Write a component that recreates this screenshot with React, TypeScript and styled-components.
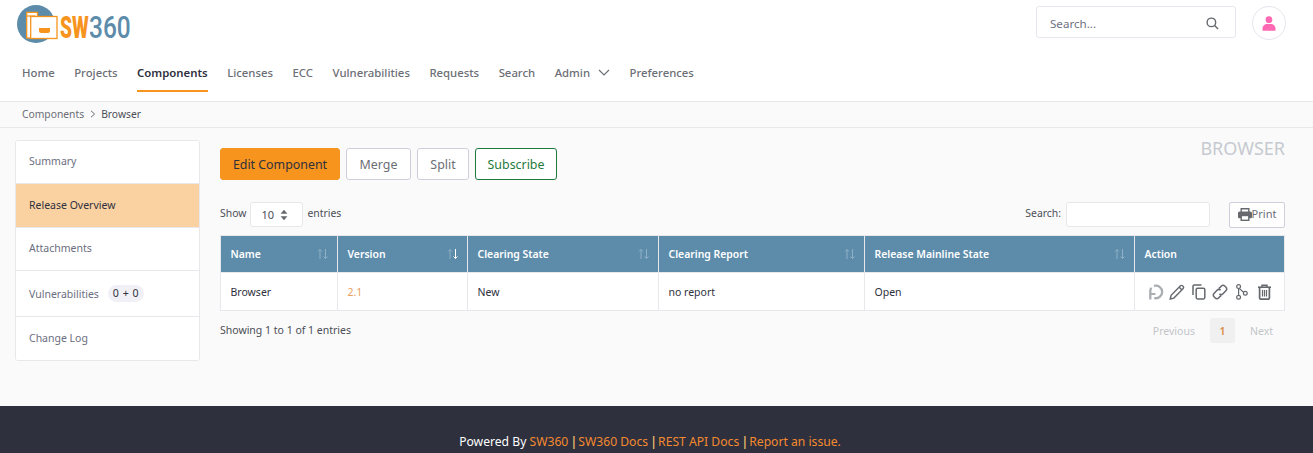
import * as React from "react";
import styled, { createGlobalStyle } from "styled-components";

const GlobalStyle = createGlobalStyle`
  html, body {
    margin: 0;
    padding: 0;
    background: #fafafa;
    font-family: "Noto Sans", "Open Sans", sans-serif;
    color: #212529;
  }
`;

const NAV_ITEMS = [
  "Home",
  "Projects",
  "Components",
  "Licenses",
  "ECC",
  "Vulnerabilities",
  "Requests",
  "Search",
  "Admin",
  "Preferences",
];

const COLUMNS = [
  { title: "Name", width: 117, sort: true },
  { title: "Version", width: 130, sort: true, active: true },
  { title: "Clearing State", width: 191, sort: true },
  { title: "Clearing Report", width: 206, sort: true },
  { title: "Release Mainline State", width: 270, sort: true },
  { title: "Action", width: 150, sort: false },
];

const Logo: React.FC = () => (
  <svg width="140" height="48" viewBox="0 0 140 48">
    <circle cx="20" cy="24" r="19" fill="#5d8cab" />
    <path d="M10.7 16V12.3H21.5V16" fill="#fff" stroke="#f7941d" strokeWidth="1.3" />
    <rect x="10.7" y="16" width="8" height="22" fill="#fff" stroke="#f7941d" strokeWidth="1.3" />
    <rect x="14.7" y="16.5" width="26.3" height="22" fill="#fff" stroke="#f7941d" strokeWidth="1.3" />
    <path d="M23 28H34V31Q34 33 32 33H25Q23 33 23 31Z" fill="#f7941d" />
    <text transform="translate(44 38) scale(.62 1)" fontFamily="Roboto, sans-serif" fontWeight="900" fontSize="31" fill="#f7941d">SW</text>
    <text transform="translate(73 38) scale(.79 1)" fontFamily="Roboto, sans-serif" fontWeight="500" fontSize="31" fill="#5d8cab">360</text>
  </svg>
);

const SortIcon: React.FC<{ active?: boolean }> = ({ active }) => (
  <svg width="12" height="12" viewBox="0 0 12 12" fill="none" strokeWidth="1">
    <path d="M3 11V1.5M1 3.5l2-2 2 2" stroke="#8fb0c6" />
    <path d="M8.5 1v9.5M6.5 8.5l2 2 2-2" stroke={active ? "#ffffff" : "#8fb0c6"} />
  </svg>
);

const ActionIcons: React.FC = () => (
  <ActionRow>
    <svg width="16" height="16" viewBox="0 0 16 16" fill="none" stroke="#a9adb1" strokeWidth="2.3">
      <path d="M6 1.9A6.3 6.3 0 1 1 6.2 14" />
      <path d="M2.3 15.5V6.2A4 4 0 0 1 3.6 3.8" />
      <path d="M2 10h5.4" strokeWidth="2" />
    </svg>
    <svg width="16" height="16" viewBox="0 0 16 16" fill="none" stroke="#66696e" strokeWidth="1.4">
      <path d="M1.2 15l.9-3.7L11.5 1.8a1.4 1.4 0 0 1 2 0l.7.7a1.4 1.4 0 0 1 0 2L4.9 14.1z" />
      <path d="M10.2 3.2l2.6 2.6" />
    </svg>
    <svg width="14" height="16" viewBox="0 0 14 16" fill="none" stroke="#66696e" strokeWidth="1.5">
      <path d="M9.5 1H2.2C1.5 1 1 1.5 1 2.2V11" />
      <rect x="4.2" y="4.2" width="8.6" height="10.8" rx="1.4" />
    </svg>
    <svg width="16" height="16" viewBox="0 0 16 16" fill="none" stroke="#66696e" strokeWidth="1.5">
      <path d="M6.8 4.6l2.4-2.4a2.7 2.7 0 0 1 3.8 0l.8.8a2.7 2.7 0 0 1 0 3.8L11 9.7a2.7 2.7 0 0 1-3.6.2" />
      <path d="M9.2 11.4l-2.4 2.4a2.7 2.7 0 0 1-3.8 0l-.8-.8a2.7 2.7 0 0 1 0-3.8L5 6.3a2.7 2.7 0 0 1 3.6-.2" />
    </svg>
    <svg width="12" height="16" viewBox="0 0 12 16" fill="none" stroke="#66696e" strokeWidth="1.2">
      <circle cx="2.6" cy="2.6" r="1.9" />
      <circle cx="2.6" cy="13.2" r="1.9" />
      <circle cx="9.3" cy="9.2" r="1.9" />
      <path d="M2.6 4.6v6.6M3.4 4.6L7.6 8.2" />
    </svg>
    <svg width="13" height="16" viewBox="0 0 13 16" fill="none" stroke="#66696e">
      <path d="M0 3.2h13" strokeWidth="1.6" />
      <path d="M4 3V1.2h5V3" strokeWidth="1.4" />
      <path d="M1.6 3.5V14a1.2 1.2 0 0 0 1.2 1.2h7.4a1.2 1.2 0 0 0 1.2-1.2V3.5" strokeWidth="1.7" />
      <path d="M4.5 6v6.4M6.5 6v6.4M8.5 6v6.4" strokeWidth="1.2" />
    </svg>
  </ActionRow>
);

export default function App() {
  return (
    <>
      <GlobalStyle />
      <Page>
        <Header>
          <TopRow>
            <Logo />
            <HeaderTools>
              <GlobalSearch>
                <span>Search...</span>
                <svg width="13" height="13" viewBox="0 0 14 14" fill="none" stroke="#66696e" strokeWidth="1.5">
                  <circle cx="5.8" cy="5.8" r="4.6" />
                  <path d="M9.2 9.2L13 13" />
                </svg>
              </GlobalSearch>
              <Avatar>
                <svg width="14" height="15" viewBox="0 0 14 15" fill="#ff69b4">
                  <circle cx="7" cy="3.7" r="3.4" />
                  <path d="M0.5 14.8v-2.2C0.5 9.8 2.8 8 5 8h4c2.2 0 4.5 1.8 4.5 4.6v2.2z" />
                </svg>
              </Avatar>
            </HeaderTools>
          </TopRow>
          <Nav>
            {NAV_ITEMS.map((item) => (
              <NavItem key={item} $active={item === "Components"}>
                {item}
                {item === "Admin" && (
                  <svg width="12" height="7" viewBox="0 0 12 7" fill="none" stroke="#6b6e75" strokeWidth="1.2">
                    <path d="M1 1l5 5 5-5" />
                  </svg>
                )}
              </NavItem>
            ))}
          </Nav>
        </Header>
        <Breadcrumb>
          <span>Components</span>
          <svg width="6" height="8" viewBox="0 0 6 8" fill="none" stroke="#6b6e75" strokeWidth="1">
            <path d="M1 .8L4.6 4 1 7.2" />
          </svg>
          <BreadcrumbCurrent>Browser</BreadcrumbCurrent>
        </Breadcrumb>
        <Content>
          <Sidebar>
            <SideItem $height={43}>Summary</SideItem>
            <SideItem $height={44} $active>Release Overview</SideItem>
            <SideItem $height={43}>Attachments</SideItem>
            <SideItem $height={46} $flush>
              Vulnerabilities
              <Pill>0 + 0</Pill>
            </SideItem>
            <SideItem $height={43}>Change Log</SideItem>
          </Sidebar>
          <Main>
            <ButtonBar>
              <Buttons>
                <PrimaryButton>Edit Component</PrimaryButton>
                <GhostButton $width={65}>Merge</GhostButton>
                <GhostButton $width={52}>Split</GhostButton>
                <SubscribeButton>Subscribe</SubscribeButton>
              </Buttons>
              <PageTitle>BROWSER</PageTitle>
            </ButtonBar>
            <TableControls>
              <Entries>
                <ControlText>Show</ControlText>
                <EntriesSelect>
                  10
                  <svg width="8" height="12" viewBox="0 0 8 12" fill="#66696e">
                    <path d="M4 .8L7.4 4.8H.6zM4 11.2L.6 7.2h6.8z" />
                  </svg>
                </EntriesSelect>
                <ControlText>entries</ControlText>
              </Entries>
              <TableTools>
                <ControlText>Search:</ControlText>
                <SearchInput />
                <PrintButton>
                  <svg width="14" height="13" viewBox="0 0 14 13" fill="none" stroke="#66696e" strokeWidth="1.4">
                    <path d="M3.2 4.5V.8h7.6v3.7" />
                    <path d="M3 9.5H1.2a.5.5 0 0 1-.5-.5V5.2c0-.6.4-1 1-1h10.6c.6 0 1 .4 1 1V9a.5.5 0 0 1-.5.5H11" fill="#66696e" />
                    <rect x="3.2" y="7.5" width="7.6" height="4.8" fill="#fff" />
                  </svg>
                  <PrintLabel>Print</PrintLabel>
                </PrintButton>
              </TableTools>
            </TableControls>
            <Table>
              <colgroup>
                {COLUMNS.map((col) => (
                  <col key={col.title} width={col.width} />
                ))}
              </colgroup>
              <thead>
                <tr>
                  {COLUMNS.map((col) => (
                    <HeadCell key={col.title}>
                      <HeadInner>
                        {col.title}
                        {col.sort && <SortIcon active={col.active} />}
                      </HeadInner>
                    </HeadCell>
                  ))}
                </tr>
              </thead>
              <tbody>
                <tr>
                  <BodyCell>Browser</BodyCell>
                  <BodyCell><VersionLink>2.1</VersionLink></BodyCell>
                  <BodyCell>New</BodyCell>
                  <BodyCell>no report</BodyCell>
                  <BodyCell>Open</BodyCell>
                  <BodyCell><ActionIcons /></BodyCell>
                </tr>
              </tbody>
            </Table>
            <TableFooter>
              <EntriesInfo>Showing 1 to 1 of 1 entries</EntriesInfo>
              <Pager>
                <PagerLabel>Previous</PagerLabel>
                <PagerCurrent>1</PagerCurrent>
                <PagerLabel>Next</PagerLabel>
              </Pager>
            </TableFooter>
          </Main>
        </Content>
        <Footer>
          <span>Powered By </span>
          <FooterLink>SW360</FooterLink>
          <FooterSep> | </FooterSep>
          <FooterLink>SW360 Docs</FooterLink>
          <FooterSep> | </FooterSep>
          <FooterLink>REST API Docs</FooterLink>
          <FooterSep> | </FooterSep>
          <FooterLink>Report an issue.</FooterLink>
        </Footer>
      </Page>
    </>
  );
}

const Page = styled.div`
  width: 1313px;
  height: 453px;
  overflow: hidden;
  display: flex;
  flex-direction: column;
`;

const Header = styled.header`
  background: #fff;
  height: 102px;
  box-sizing: border-box;
  border-bottom: 1px solid #e8e8ec;
  flex-shrink: 0;
`;

const TopRow = styled.div`
  display: flex;
  justify-content: space-between;
  height: 54px;
  padding: 0 27px 0 16px;
`;

const HeaderTools = styled.div`
  display: flex;
  align-items: flex-start;
  gap: 16px;
  padding-top: 6px;
`;

const GlobalSearch = styled.div`
  width: 200px;
  height: 32px;
  box-sizing: border-box;
  border: 1px solid #e6e6ee;
  border-radius: 3px;
  display: flex;
  align-items: center;
  justify-content: space-between;
  padding: 2px 16px 0 13px;
  font-size: 11.6px;
  color: #6d7280;
`;

const Avatar = styled.div`
  width: 34px;
  height: 34px;
  box-sizing: border-box;
  border: 1px solid #e6e6ee;
  border-radius: 50%;
  display: flex;
  align-items: center;
  justify-content: center;
`;

const Nav = styled.nav`
  display: flex;
  gap: 19.5px;
  padding-left: 22px;
  height: 38px;
`;

const NavItem = styled.div<{ $active?: boolean }>`
  font-size: 11.35px;
  font-weight: ${(p) => (p.$active ? 600 : 500)};
  height: 38px;
  box-sizing: border-box;
  display: flex;
  align-items: center;
  gap: 8px;
  color: ${(p) => (p.$active ? "#2e303e" : "#6b6e75")};
  border-bottom: 2px solid ${(p) => (p.$active ? "#f7941d" : "transparent")};
`;

const Breadcrumb = styled.div`
  height: 26px;
  box-sizing: border-box;
  flex-shrink: 0;
  background: #fafafa;
  border-bottom: 1px solid #e8e8ec;
  padding: 0 0 2px 22px;
  display: flex;
  align-items: center;
  gap: 5.5px;
  font-size: 10.3px;
  color: #6b6e75;
`;

const BreadcrumbCurrent = styled.span`
  color: #4b4e57;
`;

const Content = styled.div`
  flex: 1;
  display: flex;
  align-items: flex-start;
  padding: 12px 28px 0 15px;
  gap: 20px;
`;

const Sidebar = styled.aside`
  width: 185px;
  box-sizing: border-box;
  background: #fff;
  border: 1px solid #e8e8ec;
  border-radius: 3px;
  flex-shrink: 0;
  overflow: hidden;
`;

const SideItem = styled.div<{ $height: number; $active?: boolean; $flush?: boolean }>`
  height: ${(p) => p.$height}px;
  box-sizing: border-box;
  display: flex;
  align-items: center;
  padding: 0 0 ${(p) => (p.$flush ? 0 : 2)}px 13px;
  font-size: 10.5px;
  color: ${(p) => (p.$active ? "#2e303e" : "#6b6e80")};
  background: ${(p) => (p.$active ? "#fad2a2" : "#fff")};
  border-bottom: 1px solid #e8e8ec;

  &:last-child {
    border-bottom: 0;
  }
`;

const Pill = styled.span`
  margin-left: 9px;
  height: 17px;
  padding: 0 5px;
  border-radius: 9px;
  background: #f0f0f6;
  color: #2e303e;
  font-size: 10.6px;
  line-height: 17px;
  word-spacing: 1px;
`;

const Main = styled.main`
  flex: 1;
  min-width: 0;
`;

const ButtonBar = styled.div`
  display: flex;
  justify-content: space-between;
  align-items: flex-start;
  padding-top: 8px;
  height: 53px;
`;

const Buttons = styled.div`
  display: flex;
  gap: 6px;
`;

const BaseButton = styled.button`
  height: 32px;
  box-sizing: border-box;
  border-radius: 3px;
  font-family: inherit;
  font-size: 12.4px;
  padding: 0;
  white-space: nowrap;
  background: #fff;
`;

const PrimaryButton = styled(BaseButton)`
  width: 120px;
  background: #f7941d;
  border: 1px solid #f7941d;
  color: #2e303e;
`;

const GhostButton = styled(BaseButton)<{ $width: number }>`
  width: ${(p) => p.$width}px;
  border: 1px solid #cfcfdc;
  color: #6b6e75;
`;

const SubscribeButton = styled(BaseButton)`
  width: 82px;
  border: 1px solid #1f7a3d;
  color: #1f7a3d;
`;

const PageTitle = styled.div`
  font-size: 18px;
  color: #c6cad0;
  line-height: 24px;
  margin-top: -12px;
`;

const TableControls = styled.div`
  display: flex;
  justify-content: space-between;
  align-items: center;
  height: 27px;
  margin-bottom: 7px;
`;

const Entries = styled.div`
  display: flex;
  align-items: center;
  gap: 4px;
`;

const ControlText = styled.span`
  font-size: 10.4px;
  color: #4b4e57;
  padding-bottom: 4px;
`;

const EntriesSelect = styled.div`
  width: 53px;
  height: 25px;
  box-sizing: border-box;
  border: 1px solid #e8e8ec;
  border-radius: 3px;
  background: #fff;
  display: flex;
  align-items: center;
  justify-content: space-between;
  padding: 0 14px 0 10px;
  font-size: 11px;
  color: #4b4e57;
`;

const TableTools = styled.div`
  display: flex;
  align-items: center;
`;

const SearchInput = styled.div`
  width: 144px;
  height: 25px;
  box-sizing: border-box;
  background: #fff;
  border: 1px solid #e8e8ec;
  border-radius: 3px;
  margin: 0 19px 0 5px;
`;

const PrintButton = styled.div`
  width: 56px;
  height: 26px;
  box-sizing: border-box;
  background: #fff;
  border: 1px solid #cfcfdc;
  border-radius: 2px;
  display: flex;
  align-items: center;
  justify-content: center;
`;

const PrintLabel = styled.span`
  font-size: 11px;
  color: #6b6e75;
  padding-bottom: 2px;
`;

const Table = styled.table`
  width: 1065px;
  table-layout: fixed;
  border-collapse: collapse;
  background: #fff;
`;

const HeadCell = styled.th`
  height: 37px;
  padding: 0 8px 1px 9.5px;
  box-sizing: border-box;
  background: #5d8cab;
  border: 1px solid #e8e8ec;
  border-bottom: 0;
  color: #fff;
  font-size: 10.4px;
  font-weight: 600;
  text-align: left;
`;

const HeadInner = styled.div`
  display: flex;
  justify-content: space-between;
  align-items: center;
`;

const BodyCell = styled.td`
  height: 37px;
  padding: 0 9.5px;
  border: 1px solid #e8e8ec;
  font-size: 10.5px;
  color: #2e303e;
`;

const VersionLink = styled.span`
  color: #e8a060;
`;

const ActionRow = styled.div`
  display: grid;
  grid-template-columns: 21px 23px 20px 24px 22px 14px;
  align-items: center;
  padding-left: 3.5px;
`;

const TableFooter = styled.div`
  display: flex;
  justify-content: space-between;
  align-items: flex-start;
  padding-top: 7px;
`;

const EntriesInfo = styled.div`
  font-size: 10.5px;
  color: #4b4e57;
  line-height: 24px;
`;

const Pager = styled.div`
  display: flex;
  align-items: center;
  gap: 15px;
  padding-right: 12px;
`;

const PagerLabel = styled.span`
  font-size: 10.5px;
  color: #c3c5c9;
`;

const PagerCurrent = styled.span`
  width: 25px;
  height: 25px;
  border-radius: 2px;
  background: #f0f0f0;
  display: flex;
  align-items: center;
  justify-content: center;
  font-size: 10.5px;
  font-weight: 600;
  color: #d98d45;
`;

const Footer = styled.footer`
  height: 47px;
  flex-shrink: 0;
  box-sizing: border-box;
  background: #2e303e;
  padding: 27px 13px 0 0;
  text-align: center;
  font-size: 12.15px;
  line-height: 18px;
  color: #fff;
  white-space: pre;
`;

const FooterLink = styled.span`
  color: #f58a2e;
`;

const FooterSep = styled.span`
  color: #f5c26b;
  font-weight: 600;
  letter-spacing: -1px;
`;
